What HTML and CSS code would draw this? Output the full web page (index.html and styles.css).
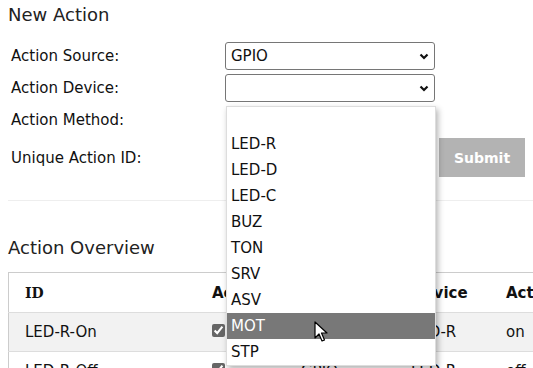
FILE: index.html
```html
<!DOCTYPE html>
<html lang="en">
<head>
    <meta charset="UTF-8">
    <meta name="viewport" content="width=device-width, initial-scale=1.0">
    <title>Actions</title>
    <link rel="stylesheet" href="styles.css">
</head>
<body>
    <h2>New Action</h2>

    <div class="form">
        <label>Action Source:</label>
        <div class="select-wrap">
            <select class="select"><option>GPIO</option></select>
            <svg class="chevron" width="10" height="7" viewBox="0 0 10 7"><path d="M1.5 1.5 L5 5 L8.5 1.5" fill="none" stroke="#111" stroke-width="2.2"/></svg>
        </div>
        <div></div>

        <label>Action Device:</label>
        <div class="select-wrap">
            <select class="select"><option></option></select>
            <svg class="chevron" width="10" height="7" viewBox="0 0 10 7"><path d="M1.5 1.5 L5 5 L8.5 1.5" fill="none" stroke="#111" stroke-width="2.2"/></svg>
            <ul class="dropdown">
                <li class="empty"></li>
                <li>LED-R</li>
                <li>LED-D</li>
                <li>LED-C</li>
                <li>BUZ</li>
                <li>TON</li>
                <li>SRV</li>
                <li>ASV</li>
                <li class="hover">MOT</li>
                <li>STP</li>
            </ul>
            <svg class="cursor" width="14" height="22" viewBox="0 0 14 22"><path d="M1 1 L1 17 L5 13 L8 20 L10.5 19 L7.5 12 L13 12 Z" fill="#fff" stroke="#000" stroke-width="1.2" stroke-linejoin="round"/></svg>
        </div>
        <div></div>

        <label>Action Method:</label>
        <div></div>
        <div></div>

        <label>Unique Action ID:</label>
        <div></div>
        <button class="submit" disabled>Submit</button>
    </div>

    <hr>

    <h2>Action Overview</h2>

    <table>
        <tr>
            <th class="col-id">ID</th>
            <th class="col-active">Active</th>
            <th class="col-src">Source</th>
            <th class="col-dev">Device</th>
            <th>Action</th>
        </tr>
        <tr class="odd">
            <td>LED-R-On</td>
            <td><input type="checkbox" checked></td>
            <td>GPIO</td>
            <td>LED-R</td>
            <td>on</td>
        </tr>
        <tr>
            <td>LED-R-Off</td>
            <td><input type="checkbox" checked></td>
            <td>GPIO</td>
            <td>LED-R</td>
            <td>off</td>
        </tr>
    </table>
</body>
</html>
```

FILE: styles.css
```css
body {
    font-family: "DejaVu Sans", Verdana, sans-serif;
    font-size: 15px;
    color: #111;
    margin: 0;
    padding: 0 8px;
    overflow: hidden;
}
h2 {
    font-size: 18px;
    font-weight: normal;
    margin: 0;
    color: #222;
}
h2:first-child {
    padding-top: 4px;
}
.form {
    display: grid;
    grid-template-columns: 214px 210px 90px;
    grid-template-rows: 28px 28px 28px 39px;
    row-gap: 4px;
    margin: 17px 0 0 3px;
    align-items: center;
}
.select-wrap {
    position: relative;
    height: 28px;
}
.select {
    appearance: none;
    width: 210px;
    height: 28px;
    border: 1px solid #767676;
    border-radius: 3px;
    background: #fff;
    font: inherit;
    font-size: 15px;
    color: #111;
    padding: 0 5px;
    box-sizing: border-box;
}
.chevron {
    position: absolute;
    right: 6px;
    top: 11px;
}
.dropdown {
    position: absolute;
    top: 32px;
    left: 1px;
    width: 208px;
    margin: 0;
    padding: 0;
    list-style: none;
    background: #fff;
    border: 1px solid #ddd;
    box-shadow: 2px 3px 6px rgba(0, 0, 0, 0.3);
    z-index: 5;
}
.dropdown li {
    height: 26px;
    line-height: 26px;
    padding-left: 4px;
}
.dropdown li.empty {
    height: 24px;
}
.dropdown li.hover {
    background: #787878;
    color: #fff;
}
.cursor {
    position: absolute;
    left: 89px;
    top: 247px;
    z-index: 6;
}
.submit {
    margin-left: 4px;
    width: 86px;
    height: 39px;
    border: none;
    background: #b3b3b3;
    color: #fff;
    font: inherit;
    font-size: 14px;
    font-weight: bold;
}
hr {
    border: none;
    border-top: 1px solid #eee;
    margin: 23px -8px 0 0;
}
h2 + table {
    margin-top: 14px;
}
hr + h2 {
    margin-top: 36px;
}
table {
    border-collapse: collapse;
    border: 1px solid #ccc;
    width: 620px;
}
th, td {
    text-align: left;
    padding: 0 0 0 16px;
    height: 38px;
    border-bottom: 1px solid #ddd;
}
th {
    font-weight: bold;
    height: 39px;
}
th.col-id {
    font-family: "DejaVu Serif", serif;
    font-size: 14px;
}
.col-id { width: 171px; }
.col-active { width: 73px; }
.col-src { width: 94px; }
.col-dev { width: 79px; }
tr.odd {
    background: #f2f2f2;
}
input[type="checkbox"] {
    accent-color: #666;
    margin: 0;
    width: 13px;
    height: 13px;
}
```
